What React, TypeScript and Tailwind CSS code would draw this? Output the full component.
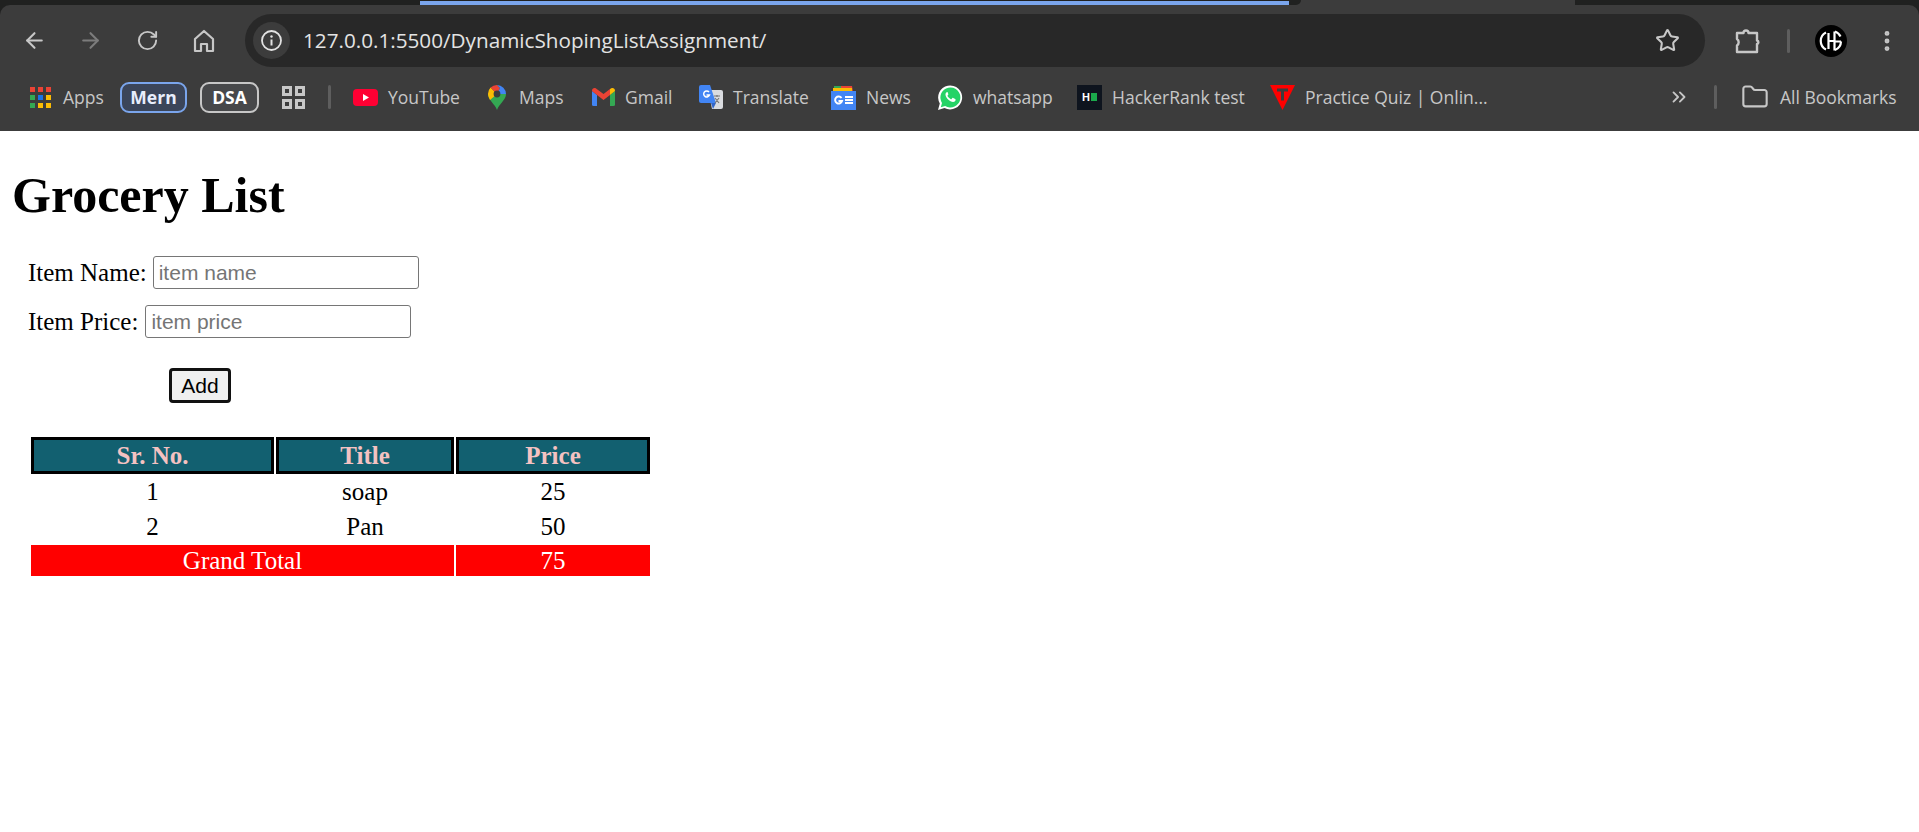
import { ArrowLeft, ArrowRight, RotateCw, Star, EllipsisVertical, ChevronsRight, Folder } from 'lucide-react'
import type { ReactNode } from 'react'

const Sep = () => <div className="w-[3px] h-[24px] bg-[#5e5e5e] rounded-sm shrink-0" />

const AppsIcon = () => {
  const colors = ['#ea4335', '#ea4335', '#ea4335', '#34a853', '#1a73e8', '#fbbc04', '#34a853', '#fbbc04', '#fbbc04']
  return (
    <div className="grid grid-cols-3 gap-[3px] w-[21px]">
      {colors.map((c, i) => (
        <div key={i} className="w-[5px] h-[5px]" style={{ backgroundColor: c }} />
      ))}
    </div>
  )
}

const YoutubeIcon = () => (
  <svg width="25" height="17" viewBox="0 0 25 17">
    <rect width="25" height="17" rx="4" fill="#ff0033" />
    <path d="M10 5l6 3.5-6 3.5z" fill="#fff" />
  </svg>
)

const MapsIcon = () => (
  <svg width="18" height="25" viewBox="0 0 18 25" className="mr-[3px]">
    <path d="M9 25C7 19 0 15 0 9h18c0 6-7 10-9 16z" fill="#34a853" />
    <path d="M0 9a9 9 0 0 1 2.6-6.4L9 9l-7 6C1 13 0 11 0 9z" fill="#fbbc04" />
    <path d="M2.6 2.6A9 9 0 0 1 9 0l3 3-3 6z" fill="#ea4335" />
    <path d="M9 0a9 9 0 0 1 9 9l-9 0 3-6z" fill="#4285f4" />
    <circle cx="9" cy="9" r="3.4" fill="#3c3c3c" />
  </svg>
)

const GmailIcon = () => (
  <svg width="23" height="18" viewBox="0 0 23 18">
    <path d="M0 3v13.5A1.5 1.5 0 0 0 1.5 18H5V7z" fill="#4285f4" />
    <path d="M23 3v13.5a1.5 1.5 0 0 1-1.5 1.5H18V7z" fill="#34a853" />
    <path d="M18 7l5-4c0-3-2.500-3.500-4-2.500L18 1z" fill="#fbbc04" />
    <path d="M5 7L0 3c0-3 2.500-3.500 4-2.500L11.500 6 18 1v6l-6.500 5z" fill="#ea4335" />
  </svg>
)

const TranslateIcon = () => (
  <svg width="24" height="24" viewBox="0 0 24 24">
    <path d="M9 5h13a2 2 0 0 1 2 2v15a2 2 0 0 1-2 2H13z" fill="#dadce0" />
    <path d="M2 0h9l6 18H2a2 2 0 0 1-2-2V2a2 2 0 0 1 2-2z" fill="#4285f4" />
    <path d="M12 18l2 6 3-6z" fill="#3367c9" />
    <path d="M10 7a3 3 0 1 0 .5 3H7.500" fill="none" stroke="#fff" strokeWidth="1.500" />
    <path d="M15 11h6M18 10v2M16 18l4-5M20 18l-4-5" stroke="#777" strokeWidth="1.200" fill="none" />
  </svg>
)

const NewsIcon = () => (
  <svg width="25" height="25" viewBox="0 0 25 25">
    <path d="M3 1h10v6H3z" fill="#34a853" />
    <path d="M10 1h11l1 6H10z" fill="#ea4335" />
    <path d="M2 3h19v4H2z" fill="#fbbc04" />
    <rect y="6" width="25" height="19" fill="#4285f4" />
    <path d="M14 12h8M14 15h8M14 18h8" stroke="#fff" strokeWidth="2" />
    <path d="M10.500 13a3.500 3.500 0 1 0 .5 3H7.500" fill="none" stroke="#fff" strokeWidth="2" />
  </svg>
)

const WhatsappIcon = () => (
  <svg width="25" height="25" viewBox="0 0 25 25">
    <path d="M0 25l1.800-6.500A12 12 0 1 1 6.500 23z" fill="#fff" />
    <path d="M2.800 22.200l1.200-4.300A10 10 0 1 1 7.200 21z" fill="#25d366" />
    <path d="M9.300 7c-.5 0-1.300.6-1.700 1.600-.5 1.500.3 3.500 2 5.300 1.900 2 4 3 5.500 3 1.200 0 2.400-1 2.500-2 .1-.5-.1-.8-.4-1l-2-1c-.4-.1-.6 0-.8.2l-.8 1c-.2.200-.4.200-.7.100-1.500-.7-2.700-1.800-3.400-3.100-.1-.3 0-.5.100-.6l.6-.8c.2-.2.2-.5.100-.7l-.8-1.900C9.800 7.100 9.600 7 9.300 7z" fill="#fff" />
  </svg>
)

const HackerRankIcon = () => (
  <div className="w-[25px] h-[25px] bg-[#0e141e] flex items-center justify-center gap-[1px]">
    <div className="text-white text-[11px] leading-none font-bold font-['Liberation_Sans',sans-serif]">H</div>
    <div className="w-[6px] h-[8px] bg-[#1ba94c]" />
  </div>
)

const QuizIcon = () => (
  <svg width="25" height="25" viewBox="0 0 25 25">
    <path d="M0 0h25L12.500 25z" fill="#ff0000" />
    <path d="M7 3.500h11v3h-4v9h-3v-9H7z" fill="#3c3c3c" />
  </svg>
)

const AvatarIcon = () => (
  <svg width="32" height="32" viewBox="0 0 32 32">
    <circle cx="16" cy="16" r="16" fill="#000" />
    <path d="M11 7.500a9.500 9.500 0 0 0 0 17" stroke="#fff" strokeWidth="2.200" fill="none" />
    <path d="M13.500 8v16M13.500 16h6M19.500 6.500v19" stroke="#fff" strokeWidth="2.200" fill="none" />
    <path d="M20 6.500a9.500 9.500 0 0 1 5.500 5M26 16.500h-6M26 16.500a9.500 9.500 0 0 1-6 8.500" stroke="#fff" strokeWidth="2.200" fill="none" />
  </svg>
)

const bookmarks: { name: string; icon: ReactNode; width: string }[] = [
  { name: 'YouTube', icon: <YoutubeIcon />, width: 'w-[135px]' },
  { name: 'Maps', icon: <MapsIcon />, width: 'w-[104px]' },
  { name: 'Gmail', icon: <GmailIcon />, width: 'w-[107px]' },
  { name: 'Translate', icon: <TranslateIcon />, width: 'w-[132px]' },
  { name: 'News', icon: <NewsIcon />, width: 'w-[107px]' },
  { name: 'whatsapp', icon: <WhatsappIcon />, width: 'w-[139px]' },
  { name: 'HackerRank test', icon: <HackerRankIcon />, width: 'w-[193px]' },
  { name: 'Practice Quiz | Onlin...', icon: <QuizIcon />, width: 'w-[398px]' },
]

const BrowserChrome = () => (
  <div className="bg-[#202120] font-['Open_Sans',sans-serif]">
    <div className="flex h-[5px]">
      <div className="w-[420px]" />
      <div className="w-[869px] h-[4px] mt-[1px] bg-[#7aa5ec]" />
      <div className="w-[286px] bg-[#3c3c3c] flex">
        <div className="w-[12px] h-[5px] bg-[#202120] rounded-br-[5px]" />
      </div>
      <div className="flex-1 bg-[#202120] rounded-bl-[8px]" />
    </div>
    <div className="h-[126px] bg-[#3c3c3c] rounded-t-[10px] flex flex-col">
      <div className="flex items-center h-[53px] mt-[9px] pl-[22px]">
        <ArrowLeft size={25} strokeWidth={2} className="text-[#c7c7c7] shrink-0" />
        <ArrowRight size={25} strokeWidth={2} className="text-[#7c7c7c] ml-[31px] shrink-0" />
        <RotateCw size={23} strokeWidth={2} className="text-[#c7c7c7] ml-[33px] shrink-0" />
        <svg width="22" height="24" viewBox="0 0 22 24" className="ml-[34px] shrink-0">
          <path d="M2 10l9-8 9 8v12h-6v-7H8v7H2z" fill="none" stroke="#c7c7c7" strokeWidth="2.200" strokeLinejoin="round" />
        </svg>
        <div className="ml-[30px] w-[1460px] h-[53px] rounded-full bg-[#282828] flex items-center pl-[8px] pr-[25px] shrink-0">
          <div className="w-[37px] h-[37px] rounded-full bg-[#3c3c3c] flex items-center justify-center shrink-0">
            <svg width="21" height="21" viewBox="0 0 21 21">
              <circle cx="10.500" cy="10.500" r="9.500" fill="none" stroke="#e3e3e3" strokeWidth="1.800" />
              <path d="M10.500 9.500v6" stroke="#e3e3e3" strokeWidth="2" />
              <circle cx="10.500" cy="6.500" r="1.200" fill="#e3e3e3" />
            </svg>
          </div>
          <span className="ml-[13px] text-[20.7px] text-[#e3e3e3] flex-1">127.0.0.1:5500/DynamicShopingListAssignment/</span>
          <Star size={25} strokeWidth={2} className="text-[#c7c7c7]" />
        </div>
        <svg width="27" height="26" viewBox="0 0 27 26" className="ml-[29px] shrink-0">
          <path d="M3 5h6.500a2.500 2.500 0 0 1 5 0H23v7.500a1.800 1.800 0 0 1 0 3.500V24H3v-6.500a4 4 0 0 0 0-6.500z" fill="none" stroke="#c7c7c7" strokeWidth="2.400" strokeLinejoin="round" />
        </svg>
        <div className="ml-[26px]"><Sep /></div>
        <div className="ml-[25px] shrink-0"><AvatarIcon /></div>
        <EllipsisVertical size={26} strokeWidth={2.500} className="text-[#c7c7c7] ml-[27px] shrink-0" />
      </div>
      <div className="flex items-center h-[36px] mt-[12px] pl-[30px] text-[17.5px] text-[#c7c7c7]">
        <AppsIcon />
        <span className="ml-[12px] w-[57px]">Apps</span>
        <div className="w-[67px] h-[31px] rounded-[9px] border-2 border-[#7aa5ec] bg-[#3b4559] text-[#e8eefc] font-bold flex items-center justify-center">Mern</div>
        <div className="ml-[13px] w-[59px] h-[31px] rounded-[9px] border-2 border-[#c7c7c7] bg-[#47484a] text-white font-bold flex items-center justify-center">DSA</div>
        <div className="ml-[23px] w-[23px] grid grid-cols-2 gap-[3px]">
          <div className="w-[10px] h-[10px] border-[3px] border-[#c7c7c7]" />
          <div className="w-[10px] h-[10px] border-[3px] border-[#c7c7c7]" />
          <div className="w-[10px] h-[10px] border-[3px] border-[#c7c7c7]" />
          <div className="w-[10px] h-[10px] border-[3px] border-[#c7c7c7]" />
        </div>
        <div className="ml-[23px] mr-[22px]"><Sep /></div>
        {bookmarks.map((b, idx) => (
          <div key={idx} className={`flex items-center ${b.width} shrink-0 gap-[10px]`}>
            {b.icon}
            <span className="whitespace-nowrap">{b.name}</span>
          </div>
        ))}
        <ChevronsRight size={22} strokeWidth={2} className="text-[#c7c7c7] shrink-0" />
        <div className="ml-[24px]"><Sep /></div>
        <Folder size={28} strokeWidth={1.800} className="text-[#c7c7c7] ml-[24px] shrink-0" />
        <span className="ml-[11px] whitespace-nowrap">All Bookmarks</span>
      </div>
    </div>
  </div>
)

const rows = [
  { id: 1, title: 'soap', price: 25, height: 'h-[32px]' },
  { id: 2, title: 'Pan', price: 50, height: 'h-[33px]' },
]

export default function App() {
  return (
    <div className="min-h-[832px] bg-white text-black font-['Liberation_Serif',serif] text-[25px]">
      <BrowserChrome />
      <div className="pl-[12px]">
        <h1 className="text-[50px] font-bold leading-[57px] mt-[36px]">Grocery List</h1>
        <div className="pl-[16px] mt-[32px]">
          <div className="flex items-center h-[33px] gap-[6px]">
            <label>Item Name:</label>
            <input
              placeholder="item name"
              className="w-[266px] h-[33px] border border-[#767676] rounded-[3px] px-[5px] text-[21px] font-['Liberation_Sans',sans-serif] placeholder:text-[#757575]"
            />
          </div>
          <div className="flex items-center h-[33px] gap-[7px] mt-[16px]">
            <label>Item Price:</label>
            <input
              placeholder="item price"
              className="w-[266px] h-[33px] border border-[#767676] rounded-[3px] px-[5px] text-[21px] font-['Liberation_Sans',sans-serif] placeholder:text-[#757575]"
            />
          </div>
          <button className="block ml-[141px] mt-[30px] w-[62px] h-[35px] border-[3px] border-[#111] rounded-[4px] bg-[#efefef] text-[21px] leading-none font-['Liberation_Sans',sans-serif]">
            Add
          </button>
        </div>
        <table className="ml-[17px] mt-[32px] border-separate border-spacing-[2px] text-center leading-[28px]">
          <thead>
            <tr>
              <th className="w-[243px] h-[37px] border-[3px] border-black bg-[#126070] text-[#f4c2c2] p-0">Sr. No.</th>
              <th className="w-[178px] h-[37px] border-[3px] border-black bg-[#126070] text-[#f4c2c2] p-0">Title</th>
              <th className="w-[194px] h-[37px] border-[3px] border-black bg-[#126070] text-[#f4c2c2] p-0">Price</th>
            </tr>
          </thead>
          <tbody>
            {rows.map(r => (
              <tr key={r.id}>
                <td className={`${r.height} p-0`}>{r.id}</td>
                <td className={`${r.height} p-0`}>{r.title}</td>
                <td className={`${r.height} p-0`}>{r.price}</td>
              </tr>
            ))}
            <tr>
              <td colSpan={2} className="h-[31px] p-0 bg-[#ff0000] text-white">Grand Total</td>
              <td className="h-[31px] p-0 bg-[#ff0000] text-white">75</td>
            </tr>
          </tbody>
        </table>
      </div>
    </div>
  )
}
